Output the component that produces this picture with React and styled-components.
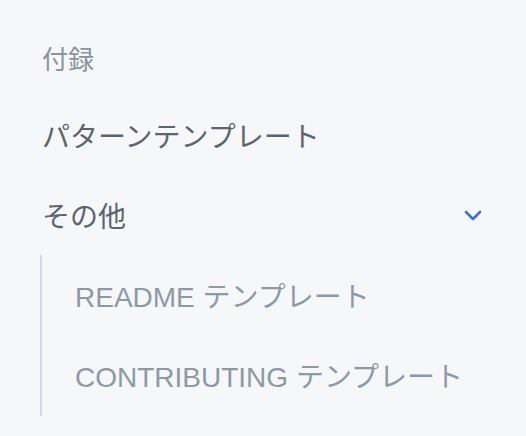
import React from "react";
import styled, { createGlobalStyle } from "styled-components";

const Global = createGlobalStyle`
  html, body { margin: 0; padding: 0; background: #f6f7f9; }
  body { font-family: "Liberation Sans", "Noto Sans CJK JP", sans-serif; }
`;

const Nav = styled.nav`
  width: 526px;
  height: 436px;
  box-sizing: border-box;
  padding: 40px 44px 0 40px;
  background: #f6f7f9;
  display: flex;
  flex-direction: column;
`;

const SectionLabel = styled.div`
  height: 40px;
  line-height: 40px;
  font-size: 26px;
  color: #8a939f;
  margin-bottom: 15px;
  padding-left: 2px;
`;

const Item = styled.div`
  height: 80px;
  display: flex;
  align-items: center;
  justify-content: space-between;
  font-size: 28px;
  color: ${(p) => (p.$sub ? "#8d99a8" : "#5b6571")};
  padding-left: ${(p) => (p.$sub ? "33px" : "2px")};
`;

const SubGroup = styled.div`
  border-left: 2px solid #d2dae4;
  display: flex;
  flex-direction: column;
  padding-bottom: 1px;
`;

const Chevron = () => (
  <svg width="18" height="12" viewBox="0 0 18 12" fill="none">
    <path d="M2 3 L9 10 L16 3" stroke="#3e6fd6" strokeWidth="2.6" strokeLinecap="round" strokeLinejoin="round" />
  </svg>
);

export default function App() {
  return (
    <>
      <Global />
      <Nav>
        <SectionLabel>付録</SectionLabel>
        <Item>パターンテンプレート</Item>
        <Item>
          その他
          <Chevron />
        </Item>
        <SubGroup>
          <Item $sub>README テンプレート</Item>
          <Item $sub>CONTRIBUTING テンプレート</Item>
        </SubGroup>
      </Nav>
    </>
  );
}
